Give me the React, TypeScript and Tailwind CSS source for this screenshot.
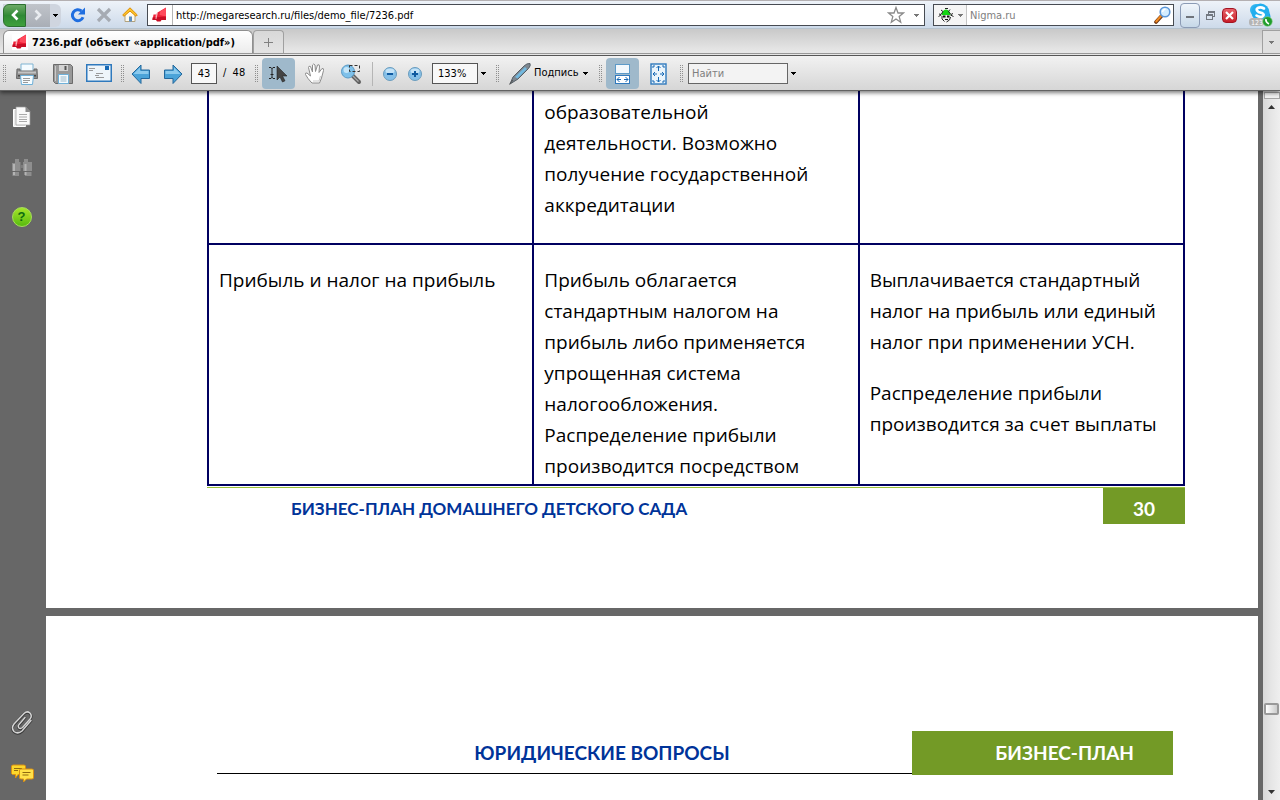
import type { ReactNode } from "react"

const uiFont = "font-['DejaVu_Sans_Condensed','DejaVu_Sans',sans-serif]"
const docFont = "font-['Open_Sans','Noto_Sans',sans-serif]"

const Caret = ({ color = "#000" }: { color?: string }) => (
    <svg width="5" height="3" viewBox="0 0 5 3" shapeRendering="crispEdges" className="shrink-0">
        <path d="M0 0h5v1H4v1H3v1H2V2H1V1H0z" fill={color} />
    </svg>
)

const Megaphone = () => (
    <svg width="16" height="16" viewBox="0 0 16 16" className="shrink-0">
        <rect width="16" height="16" fill="#fff" />
        <path d="M5.500 5.500L14 0.500V13H4.500z" fill="#ee2038" />
        <path d="M8 4.500L14 1v8.500L7.500 8z" fill="#ff4a5c" />
        <path d="M1.500 7.500h2.500L3.500 13H0.500z" fill="#ee2038" />
        <path d="M0.500 10.500L14 9.500V13H9.500L8.500 14.500H5L4 13H0.500z" fill="#c90d25" />
        <path d="M4 7L5.500 5.500 4.500 12H3.500z" fill="#f7a9b1" />
    </svg>
)

const Grip = () => (
    <svg width="4" height="18" viewBox="0 0 4 18" shapeRendering="crispEdges" className="shrink-0">
        {[0, 2, 4, 6, 8, 10, 12, 14, 16].map((y) => (
            <g key={y} fill="#8f8f8f">
                <rect x="0" y={y} width="1" height="1" />
                <rect x="2" y={y} width="1" height="1" />
            </g>
        ))}
    </svg>
)

const ToolButton = ({ label, className, children }: { label: string; className: string; children: ReactNode }) => (
    <button type="button" aria-label={label} className={`flex shrink-0 items-center justify-center ${className}`}>
        {children}
    </button>
)

const BrowserBar = () => (
    <div className="flex h-7 items-center border-t border-[#b4b0b2] bg-linear-to-b from-[#eef3f9] to-[#cddaea] pt-px pr-[7px] pl-[3px]">
        <div className="flex h-[23px] w-[58px] shrink-0 items-center rounded-r-md bg-[#cfd5df]">
            <ToolButton label="Назад" className="h-[23px] w-[23px] rounded-l-md border border-[#2c7030] bg-linear-to-b from-[#6cab68] via-[#2f8a35] to-[#3fa03c]">
                <svg width="12" height="12" viewBox="0 0 12 12" fill="none" stroke="#fff" strokeWidth="2.600">
                    <path d="M8.500 1.500L4 6l4.500 4.500" />
                </svg>
            </ToolButton>
            <ToolButton label="Вперёд" className="h-[23px] w-6 bg-linear-to-b from-[#c0c4ca] to-[#a9aeb6]">
                <svg width="12" height="12" viewBox="0 0 12 12" fill="none" stroke="#e9ecf0" strokeWidth="2.600">
                    <path d="M3.500 1.500L8 6l-4.500 4.500" />
                </svg>
            </ToolButton>
            <ToolButton label="История" className="h-[23px] w-[11px]">
                <Caret />
            </ToolButton>
        </div>
        <ToolButton label="Обновить" className="ml-1 h-6 w-[26px]">
            <svg width="16" height="16" viewBox="0 0 16 16">
                <path d="M13 10.200A5.500 5.500 0 1 1 11.500 4" fill="none" stroke="#1f6ee0" strokeWidth="3" />
                <path d="M15 0.500V7.500H8z" fill="#1f6ee0" />
            </svg>
        </ToolButton>
        <ToolButton label="Остановить" className="h-6 w-[26px]">
            <svg width="16" height="16" viewBox="0 0 16 16" fill="none" stroke="#a6abb3" strokeWidth="3.200">
                <path d="M2 2l12 12M14 2L2 14" />
            </svg>
        </ToolButton>
        <ToolButton label="Домой" className="h-6 w-[26px]">
            <svg width="16" height="16" viewBox="0 0 16 16">
                <path d="M3 7.500L8 3l5 4.500V14.500H3z" fill="#fdfaf0" stroke="#b3a27c" />
                <path d="M7 9.500h3v5H7z" fill="#5d8fc4" />
                <path d="M8 0.800L15.300 8 14 9.300 8 4 2 9.300 0.700 8z" fill="#ffc629" stroke="#dc8c05" />
            </svg>
        </ToolButton>
        <div className="ml-1 flex h-[22px] min-w-0 flex-1 items-center border border-[#474b52] bg-white">
            <span className="flex h-full w-[25px] shrink-0 items-center justify-center border-r border-[#b5b5b5]">
                <Megaphone />
            </span>
            <input aria-label="Адрес" defaultValue="http://megaresearch.ru/files/demo_file/7236.pdf" className="min-w-0 flex-1 bg-transparent pt-[2px] pl-[3px] text-[11px] text-black outline-none" />
            <ToolButton label="Добавить в закладки" className="h-5 w-6">
                <svg width="18" height="18" viewBox="0 0 18 18" fill="#fff" stroke="#8a8a8a" strokeWidth="1.300">
                    <path d="M9 1.500l2 5.500h5.500l-4.300 3.600 1.500 5.600L9 13l-4.700 3.200 1.500-5.600L1.500 7H7z" />
                </svg>
            </ToolButton>
            <ToolButton label="Список адресов" className="h-5 w-4">
                <Caret color="#777" />
            </ToolButton>
        </div>
        <div className="ml-2 flex h-[22px] w-[241px] shrink-0 items-center border border-[#474b52] bg-white">
            <ToolButton label="Выбор поиска" className="h-5 w-[33px] gap-1 border-r border-[#c4c4c4] bg-[#f5f5f5]">
                <svg width="16" height="16" viewBox="0 0 16 16">
                    <path d="M3.500 8.500Q4 3 8 2.500 12 3 12.500 8.500L8 10z" fill="#12d412" />
                    <path d="M4 8h8.500v3L8.500 14.500 5 12z" fill="#e9e9e9" />
                    <path d="M3 3l2 1.500L3 7.500 1 7M0.500 9.500L3 8M4 9v3l2.500 2.500M12 2.500l-1.500 2 2.500 3 2-1M15.500 9.500l-3-1.500M12.500 10l-1 3-3 2M7 1.500h3" stroke="#222" fill="none" />
                    <path d="M5 8.500h2.500v2H5zM9 8.500h2.500v2H9zM7 12h3v1H7z" fill="#111" />
                </svg>
                <Caret color="#777" />
            </ToolButton>
            <input aria-label="Поиск" placeholder="Nigma.ru" className="min-w-0 flex-1 bg-transparent pt-[2px] pl-[3px] text-[11px] placeholder-[#808080] outline-none" />
            <ToolButton label="Искать" className="h-5 w-5">
                <svg width="18" height="18" viewBox="0 0 18 18">
                    <path d="M2 16l5.500-6" stroke="#6b3410" strokeWidth="3.600" strokeLinecap="round" />
                    <path d="M2.200 15.500L7 10" stroke="#f08a24" strokeWidth="2" strokeLinecap="round" />
                    <circle cx="11" cy="6" r="4.800" fill="#d4edff" stroke="#5b96d8" strokeWidth="1.600" />
                    <path d="M8.500 6Q9 3.500 11.500 3.300" stroke="#fff" strokeWidth="1.400" fill="none" />
                </svg>
            </ToolButton>
        </div>
        <ToolButton label="Свернуть" className="ml-[6px] h-[25px] w-5 rounded-sm border border-[#8b9bb5] bg-linear-to-b from-[#f1f6fb] to-[#c6d8e8]">
            <span className="mt-1 h-[2px] w-2 bg-[#6f747b]" />
        </ToolButton>
        <ToolButton label="Восстановить" className="h-6 w-5">
            <svg width="9" height="9" viewBox="0 0 9 9" shapeRendering="crispEdges" fill="#727880">
                <path d="M2 0h7v6H7V5h1V2H3v1H2zM0 3h7v6H0zM1 5v3h5V5z" fillRule="evenodd" />
            </svg>
        </ToolButton>
        <ToolButton label="Закрыть" className="ml-[2px] h-[15px] w-[15px] rounded-sm border border-[#a31522] bg-linear-to-b from-[#e8606a] to-[#c81a28]">
            <svg width="9" height="9" viewBox="0 0 9 9" stroke="#fff" strokeWidth="2.200">
                <path d="M1 1l7 7M8 1L1 8" />
            </svg>
        </ToolButton>
        <ToolButton label="Skype" className="ml-[11px] h-6 w-[25px]">
            <svg width="24" height="24" viewBox="0 0 24 24">
                <circle cx="7" cy="7" r="6" fill="#2fb5f0" />
                <circle cx="15" cy="13.500" r="6.500" fill="#1ba3e6" />
                <circle cx="11.500" cy="9.500" r="9" fill="#22aeee" />
                <path d="M15 5.500Q11.500 3.500 8.800 5T9.500 9L13.500 10.300Q16 11.800 13.500 13.500 10.500 14.700 7.500 12.500" fill="none" stroke="#fff" strokeWidth="2.600" strokeLinecap="round" />
                <rect x="0" y="15" width="15" height="8" rx="3.500" fill="#b4b4b4" />
                <text x="2" y="21.500" fontSize="7" fill="#fff" fontFamily="DejaVu Sans Condensed">123</text>
                <circle cx="18.500" cy="18.500" r="4.800" fill="#1f9d2b" stroke="#8fd08f" strokeWidth="0.600" />
                <path d="M17 16q-0.500 3.500 3 4.800" stroke="#fff" strokeWidth="1.800" fill="none" />
            </svg>
        </ToolButton>
    </div>
)

const TabBar = () => (
    <div className="flex h-7 items-start border-y border-t-[#b6c3ce] border-b-[#5c5c5c] bg-linear-to-b from-[#c9c9c9] to-[#ececec]">
        <div className="flex h-[25px] w-full items-end border-b border-[#9a9a9a] pl-[3px]">
            <button type="button" className="flex h-[23px] w-[250px] shrink-0 items-center gap-1 rounded-t-md border border-b-0 border-[#8f8f8f] bg-linear-to-b from-white to-[#ececec] pl-2 text-[11px] font-bold whitespace-nowrap text-black">
                <Megaphone />
                <span className="pt-[2px]">7236.pdf (объект «application/pdf»)</span>
            </button>
            <ToolButton label="Новая вкладка" className="h-[23px] w-[31px] rounded-t-sm border border-b-0 border-[#a0a0a0] bg-linear-to-b from-[#d8d8d8] to-[#e4e4e4]">
                <svg width="9" height="9" viewBox="0 0 9 9" shapeRendering="crispEdges" fill="#808080">
                    <path d="M4 0h1v4h4v1H5v4H4V5H0V4h4z" />
                </svg>
            </ToolButton>
            <ToolButton label="Список вкладок" className="ml-auto h-[23px] w-[18px] border border-r-0 border-b-0 border-[#a0a0a0] bg-[#e0e0e0]">
                <Caret color="#777" />
            </ToolButton>
        </div>
    </div>
)

const PdfToolbar = () => (
    <div className="relative z-10 flex h-[35px] shrink-0 items-center border-b border-[#626262] bg-linear-to-b from-[#f2f2f2] to-[#d6d6d6] pt-px pl-[3px] text-[11px] shadow-[0_2px_4px_rgba(0,0,0,0.5)]">
        <Grip />
        <ToolButton label="Печать" className="ml-[2px] h-8 w-9">
            <svg width="24" height="24" viewBox="0 0 24 24">
                <path d="M6 2h12v8H6z" fill="#f4fbff" stroke="#7fb4d3" />
                <path d="M2 7h3v2h14V7h3l0.500 9.500H1.500z" fill="#8c8c8c" stroke="#6a6a6a" />
                <path d="M3 9.500h18v2H3z" fill="#c4c4c4" />
                <path d="M3 13h18v1.500H3z" fill="#4a4a4a" />
                <path d="M5.500 13.500h13l-1 9h-11z" fill="#f6fcff" stroke="#6fb1d9" />
                <path d="M8 16.500h7M8 18.500h7M8 20.500h5" stroke="#9a9a9a" />
            </svg>
        </ToolButton>
        <ToolButton label="Сохранить" className="h-8 w-9">
            <svg width="24" height="24" viewBox="0 0 24 24">
                <path d="M2.500 2.500h17l2 2v17h-17l-2-2z" fill="#999" stroke="#6b6b6b" />
                <path d="M8 3h9v6H8z" fill="#d4d4d4" />
                <path d="M13.500 4h2v4h-2z" fill="#555" />
                <path d="M7.500 12.500h10v9h-10z" fill="#f4fbff" stroke="#6fb1d9" />
                <path d="M9.500 15h6M9.500 17h6M9.500 19h6" stroke="#9db8c8" />
                <path d="M4.500 4v15" stroke="#c9c9c9" />
            </svg>
        </ToolButton>
        <ToolButton label="Отправить" className="h-8 w-9">
            <svg width="26" height="19" viewBox="0 0 26 19">
                <rect x="0.750" y="0.750" width="24.500" height="16.500" fill="#eef5fa" stroke="#2f79bd" strokeWidth="1.500" />
                <rect x="19" y="2" width="4" height="4" fill="#1769b5" />
                <path d="M3 4.500h6M3 6.500h4M10 9.500h7M9 11.500h4M10 13.500h8" stroke="#999" />
            </svg>
        </ToolButton>
        <div className="ml-1"><Grip /></div>
        <ToolButton label="Предыдущая страница" className="h-8 w-8">
            <svg width="20" height="20" viewBox="0 0 20 20">
                <path d="M1 10l9-9v5h8.500v8.500H10v5z" fill="#4ba3d8" stroke="#24689c" />
                <path d="M2.500 10L9 3.500V7h8.500v3z" fill="#8ccaed" />
            </svg>
        </ToolButton>
        <ToolButton label="Следующая страница" className="h-8 w-8">
            <svg width="20" height="20" viewBox="0 0 20 20">
                <path d="M19 10l-9-9v5H1.500v8.500H10v5z" fill="#4ba3d8" stroke="#24689c" />
                <path d="M17.500 10L11 3.500V7H2.500v3z" fill="#8ccaed" />
            </svg>
        </ToolButton>
        <input aria-label="Страница" defaultValue="43" className="ml-[2px] h-[21px] w-[26px] border border-[#555] bg-[#f8f8f8] text-center outline-none" />
        <span className="ml-[6px] w-[32px] whitespace-pre">/  48</span>
        <Grip />
        <ToolButton label="Выделение" className="ml-[3px] h-[31px] w-[33px] rounded bg-[#9fb9cb]">
            <svg width="21" height="18" viewBox="0 0 21 18">
                <path d="M1 2.500h2l1 1 1-1h2M1 13.500h2l1-1 1 1h2M4 3v10M2.500 9.500h3" fill="none" stroke="#222" />
                <path d="M9 1v14l3-3 2.500 5 2.500-1.200-2.500-4.800h4.500z" fill="#444" stroke="#222" strokeWidth="0.600" />
            </svg>
        </ToolButton>
        <ToolButton label="Рука" className="ml-[2px] h-8 w-9">
            <svg width="24" height="24" viewBox="0 0 24 24">
                <path d="M8 20Q5 17 2.500 12.500 2 10.500 4 11l3.500 3L5.500 5.500Q5.500 3.500 7.500 4.500L9.500 10 9.500 3Q10.500 1 12 3l0.500 6.500L14.500 3Q16.500 2 16.500 4L16 10.500 19 6.500Q21 6 20.500 8.500L18.500 16 16.500 21H9z" fill="#fff" stroke="#8d8d8d" />
                <path d="M10 19h6l1.500-5" fill="none" stroke="#c9c9c9" />
            </svg>
        </ToolButton>
        <ToolButton label="Лупа" className="h-8 w-9">
            <svg width="22" height="22" viewBox="0 0 22 22">
                <path d="M13 13l6 6" stroke="#606060" strokeWidth="4" strokeLinecap="round" />
                <path d="M13 13l5.500 5.500" stroke="#aaa" strokeWidth="1.200" />
                <circle cx="8" cy="8.500" r="6.500" fill="#7fc1ea" stroke="#5a9ac5" />
                <circle cx="6.500" cy="7" r="3" fill="#c5e5f8" />
                <rect x="9.500" y="2.500" width="10" height="6" fill="none" stroke="#333" strokeDasharray="3 2" />
            </svg>
        </ToolButton>
        <span className="ml-[3px] h-6 w-px bg-[#b5b5b5]" />
        <ToolButton label="Уменьшить" className="ml-1 h-8 w-[25px]">
            <svg width="16" height="16" viewBox="0 0 16 16">
                <circle cx="8" cy="8" r="6.500" fill="#86c0e8" stroke="#6a9cbd" />
                <ellipse cx="8" cy="5" rx="4.500" ry="2.500" fill="#c3e2f6" />
                <path d="M5 8h6" stroke="#0f5aa0" strokeWidth="2" />
            </svg>
        </ToolButton>
        <ToolButton label="Увеличить" className="h-8 w-[25px]">
            <svg width="16" height="16" viewBox="0 0 16 16">
                <circle cx="8" cy="8" r="6.500" fill="#86c0e8" stroke="#6a9cbd" />
                <ellipse cx="8" cy="5" rx="4.500" ry="2.500" fill="#c3e2f6" />
                <path d="M5 8h6M8 5v6" stroke="#0f5aa0" strokeWidth="2" />
            </svg>
        </ToolButton>
        <input aria-label="Масштаб" defaultValue="133%" className="ml-[5px] h-[21px] w-[46px] border border-[#555] bg-[#f8f8f8] pl-[5px] outline-none" />
        <ToolButton label="Выбрать масштаб" className="mr-[8px] h-8 w-[10px]">
            <Caret />
        </ToolButton>
        <Grip />
        <button type="button" className="ml-2 flex h-8 w-[90px] shrink-0 items-center">
            <svg width="25" height="24" viewBox="0 0 25 24" className="shrink-0">
                <path d="M2 22l3-7L16 4q3-3 6-2.500 1 2-1.500 5L10 17z" fill="#7d8790" stroke="#555e66" />
                <path d="M7 15L17 5l2 2L9.500 16.500z" fill="#72b9e0" />
                <path d="M1.500 22.500L5 18" stroke="#555" />
            </svg>
            <span className="w-[50px] pl-px text-left">Подпись</span>
            <Caret />
        </button>
        <div className="ml-px"><Grip /></div>
        <ToolButton label="По ширине" className="ml-[3px] h-[31px] w-[33px] rounded bg-[#9fb9cb]">
            <svg width="17" height="22" viewBox="0 0 17 22">
                <rect x="1.500" y="1.500" width="14" height="9" fill="#f2f8fc" stroke="#5c9ac8" />
                <rect x="1.500" y="12.500" width="14" height="8" fill="#fff" stroke="#2f79bd" />
                <path d="M3 16.500h4M10 16.500h4M5.500 14L3 16.500 5.500 19M11.500 14l2.500 2.500-2.500 2.500" stroke="#1769b5" fill="none" />
            </svg>
        </ToolButton>
        <ToolButton label="Страница целиком" className="ml-[3px] h-8 w-[33px]">
            <svg width="17" height="22" viewBox="0 0 17 22">
                <rect x="1" y="1" width="15" height="20" fill="#eaf4fb" stroke="#2f79bd" strokeWidth="1.400" />
                <path d="M8.500 3v5M8.500 14v5M3 11h4M10 11h4M6.500 5l2-2 2 2M6.500 17l2 2 2-2M5 9l-2 2 2 2M12 9l2 2-2 2" stroke="#1769b5" fill="none" />
                <path d="M3 5V3h2M12 3h2v2M3 17v2h2M12 19h2v-2" stroke="#1769b5" fill="none" />
            </svg>
        </ToolButton>
        <div className="ml-[5px]"><Grip /></div>
        <input aria-label="Найти" placeholder="Найти" className="ml-1 h-[21px] w-[100px] border border-[#666] bg-[#f3f3f3] pl-[3px] placeholder-[#808080] outline-none" />
        <ToolButton label="Параметры поиска" className="h-8 w-[10px]">
            <Caret />
        </ToolButton>
    </div>
)

const Sidebar = () => (
    <nav className="flex w-[46px] shrink-0 flex-col items-center bg-[#676767] pr-[3px]">
        <ToolButton label="Страницы" className="mt-3 h-7 w-7">
            <svg width="20" height="24" viewBox="0 0 20 24">
                <path d="M1.500 4.500h12v17h-12z" fill="#ececec" stroke="#fff" />
                <path d="M4 2h9.500L18 6.500V20H4z" fill="#fafafa" stroke="#999" strokeWidth="0.700" />
                <path d="M13.500 1.500V7H18.500z" fill="#8a8a8a" />
                <path d="M7 9.500h8M7 12h8M7 14.500h8M7 16.500h8" stroke="#aaa" />
            </svg>
        </ToolButton>
        <ToolButton label="Поиск" className="mt-[23px] h-7 w-7">
            <svg width="22" height="20" viewBox="0 0 22 20">
                <path d="M4 1h4v3h1.500v9H8v5H1.500v-5H1V5h3zM13 1h4v3h4v9h-0.500v5H14v-5h-2V4h1z" fill="#8e8e8e" />
                <path d="M3 6v11M14.500 6v11" stroke="#b4b4b4" strokeWidth="2" />
                <path d="M1 13.500h8M12 13.500h9" stroke="#666" />
                <path d="M9.500 7h2.500v3H9.500z" fill="#7d7d7d" />
            </svg>
        </ToolButton>
        <ToolButton label="Справка" className="mt-[21px] h-7 w-7">
            <span className="flex h-5 w-5 items-center justify-center rounded-full border border-[#a8e05a] bg-linear-to-b from-[#a4e62a] to-[#56bb0e] font-['Liberation_Sans',sans-serif] text-[13px] font-bold text-[#0c6b10]">
                ?
            </span>
        </ToolButton>
        <ToolButton label="Вложения" className="mt-auto h-7 w-7">
            <svg width="22" height="24" viewBox="0 0 22 24" fill="none" strokeLinecap="round">
                <path d="M20 10l-9 10.500q-4 3.500-8 0.500-3-3.500 0-7.500L13 3q3-3 6-0.500 2.500 3 0 6L11.500 17q-2 1.500-3.500 0.500-1.500-2 0-3.500L14 7" stroke="#383838" strokeWidth="2.600" />
                <path d="M20 9.500l-9 10.500q-4 3.500-8 0.500-3-3.500 0-7.500L13 2.500q3-3 6-0.500 2.500 3 0 6L11.500 16.500q-2 1.500-3.500 0.500-1.500-2 0-3.500L14 6.500" stroke="#d5d5d5" strokeWidth="1.500" />
            </svg>
        </ToolButton>
        <ToolButton label="Комментарии" className="mt-[22px] mb-[13px] h-7 w-7">
            <svg width="24" height="19" viewBox="0 0 24 19">
                <path d="M2.500 1h12l1 1v7.500l-1 1H8L5.500 14v-3.500h-3l-1-1V2z" fill="#fbd62c" stroke="#d98f12" />
                <path d="M4 4.500h8M4 6.500h4" stroke="#8f6a10" />
                <path d="M10.500 5h12l1 1v8l-1 1h-6L13.500 18v-3h-3l-1-1V6z" fill="#ffe14a" stroke="#d98f12" />
                <path d="M12.500 8.500h8M12.500 11h6" stroke="#8f6a10" />
            </svg>
        </ToolButton>
    </nav>
)

const Scrollbar = () => (
    <div className="flex w-[17px] shrink-0 flex-col items-center bg-linear-to-r from-[#d9d9d9] via-[#e6e6e6] to-[#efefef]">
        <div className="mt-px h-[7px] w-4 border border-[#a5a5a5] bg-[#f0f0f0]" />
        <button type="button" aria-label="Вверх" className="flex h-4 w-4 items-center justify-center">
            <svg width="7" height="4" viewBox="0 0 7 4" fill="#333"><path d="M0 4h7L3.500 0z" /></svg>
        </button>
        <div className="mt-auto h-3 w-[15px] rounded-xs border-2 border-[#999] bg-linear-to-r from-white to-[#ccc]" />
        <button type="button" aria-label="Вниз" className="mt-[69px] flex h-4 w-4 items-center justify-center">
            <svg width="7" height="4" viewBox="0 0 7 4" fill="#333"><path d="M0 0h7L3.500 4z" /></svg>
        </button>
    </div>
)

const cell = "border-2 border-[#000060] px-[10px] align-top"

const Document = () => (
    <main className={`min-w-0 flex-1 overflow-hidden bg-[#676767] pr-[5px] text-[19px] leading-[31px] text-black ${docFont}`}>
        {/* Page 30 */}
        <section className="h-[517px] bg-white pr-[73px] pl-[161px]">
            <table className="w-full table-fixed border-collapse">
                <tbody>
                    <tr className="h-[153px]">
                        <td className={`border-t-0 ${cell}`} />
                        <td className={`border-t-0 pt-[6px] ${cell}`}>
                            образовательной<br />
                            деятельности. Возможно<br />
                            получение государственной<br />
                            аккредитации
                        </td>
                        <td className={`border-t-0 ${cell}`} />
                    </tr>
                    <tr className="h-[241px]">
                        <td className={`pt-5 ${cell}`}>Прибыль и налог на прибыль</td>
                        <td className={`pt-5 ${cell}`}>
                            Прибыль облагается<br />
                            стандартным налогом на<br />
                            прибыль либо применяется<br />
                            упрощенная система<br />
                            налогообложения.<br />
                            Распределение прибыли<br />
                            производится посредством
                        </td>
                        <td className={`pt-5 ${cell}`}>
                            <p>
                                Выплачивается стандартный<br />
                                налог на прибыль или единый<br />
                                налог при применении УСН.
                            </p>
                            <p className="mt-5">
                                Распределение прибыли<br />
                                производится за счет выплаты
                            </p>
                        </td>
                    </tr>
                </tbody>
            </table>
            <footer className="mt-px flex justify-between border-t border-[#9bbf3a] pl-[84px] font-['Lato',sans-serif] text-[17px] font-bold">
                <span className="pt-[5px] text-[#003399]">БИЗНЕС-ПЛАН ДОМАШНЕГО ДЕТСКОГО САДА</span>
                <span className="h-9 w-[82px] bg-[#739a26] pt-[5px] text-center text-[19px] text-white">30</span>
            </footer>
        </section>

        {/* Page 31 */}
        <section className="mt-2 h-[400px] bg-white pt-[115px] pr-[85px] pl-[171px] font-['Lato',sans-serif] font-bold">
            <header className="flex h-11">
                <h2 className="mb-px flex-1 border-b border-black pt-[6px] pl-[75px] text-center text-[#003399]">ЮРИДИЧЕСКИЕ ВОПРОСЫ</h2>
                <span className="w-[261px] bg-[#739a26] pt-[6px] pr-[39px] text-right text-white">БИЗНЕС-ПЛАН</span>
            </header>
        </section>
    </main>
)

const App = () => {
    return (
        <div className={`flex h-screen flex-col overflow-hidden bg-[#676767] ${uiFont}`}>
            <BrowserBar />
            <TabBar />
            <PdfToolbar />
            <div className="flex min-h-0 flex-1">
                <Sidebar />
                <Document />
                <Scrollbar />
            </div>
        </div>
    )
}

export default App
